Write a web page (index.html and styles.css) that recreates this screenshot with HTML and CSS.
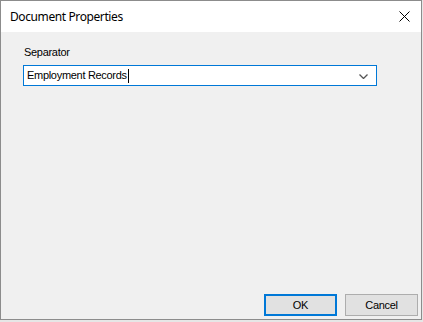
FILE: index.html
```html
<!DOCTYPE html>
<html>
<head>
<meta charset="utf-8">
<link rel="stylesheet" href="styles.css">
</head>
<body>
<div class="dialog">
  <div class="titlebar">
    <span class="title">Document Properties</span>
    <span class="close">
      <svg width="11" height="11" viewBox="0 0 11 11"><path d="M0.5 0.5 L10.5 10.5 M10.5 0.5 L0.5 10.5" stroke="#000" stroke-width="1" fill="none"/></svg>
    </span>
  </div>
  <div class="content">
    <div class="label">Separator</div>
    <div class="combo">
      <span class="combo-text">Employment Records</span><span class="caret"></span>
      <svg class="chev" width="9" height="5" viewBox="0 0 9 5"><path d="M0.5 0.5 L4.5 4.5 L8.5 0.5" stroke="#555" stroke-width="1.3" fill="none"/></svg>
    </div>
    <div class="buttons">
      <div class="btn btn-default">OK</div>
      <div class="btn">Cancel</div>
    </div>
  </div>
</div>
</body>
</html>
```
FILE: styles.css
```css
html, body {
  margin: 0;
  padding: 0;
  background: #e6e6e6;
  width: 423px;
  height: 322px;
  overflow: hidden;
}
.dialog {
  box-sizing: border-box;
  width: 422px;
  height: 320px;
  border: 1px solid #8c8c8c;
  background: #f0f0f0;
  display: flex;
  flex-direction: column;
}
.titlebar {
  height: 31px;
  background: #ffffff;
  display: flex;
  align-items: center;
  justify-content: space-between;
  padding: 0 11px 0 9px;
  flex: none;
}
.title {
  font-family: "Noto Sans", sans-serif;
  font-size: 12px;
  letter-spacing: -0.4px;
  color: #000;
  margin-top: -1px;
}
.close {
  display: flex;
  margin-top: -1px;
}
.content {
  flex: 1;
  display: flex;
  flex-direction: column;
  padding: 14px 0 3px 22px;
  font-family: "Liberation Sans", Arial, sans-serif;
  font-size: 11px;
  letter-spacing: -0.3px;
  color: #000;
}
.label {
  line-height: 13px;
  padding-left: 1px;
  margin-bottom: 6px;
}
.combo {
  box-sizing: border-box;
  width: 354px;
  height: 21px;
  border: 1px solid #0078d7;
  background: #fff;
  display: flex;
  align-items: center;
  padding-left: 3px;
  position: relative;
}
.combo-text {
  line-height: 13px;
}
.caret {
  display: inline-block;
  width: 1px;
  height: 14px;
  background: #000;
  margin-left: 1px;
}
.chev {
  position: absolute;
  right: 8px;
  top: 8px;
}
.buttons {
  margin-top: auto;
  display: flex;
  justify-content: flex-end;
  gap: 8px;
  padding-right: 3px;
}
.btn {
  box-sizing: border-box;
  width: 73px;
  height: 22px;
  border: 1px solid #adadad;
  background: #e1e1e1;
  display: flex;
  align-items: center;
  justify-content: center;
}
.btn-default {
  border: 2px solid #0078d7;
}
```
